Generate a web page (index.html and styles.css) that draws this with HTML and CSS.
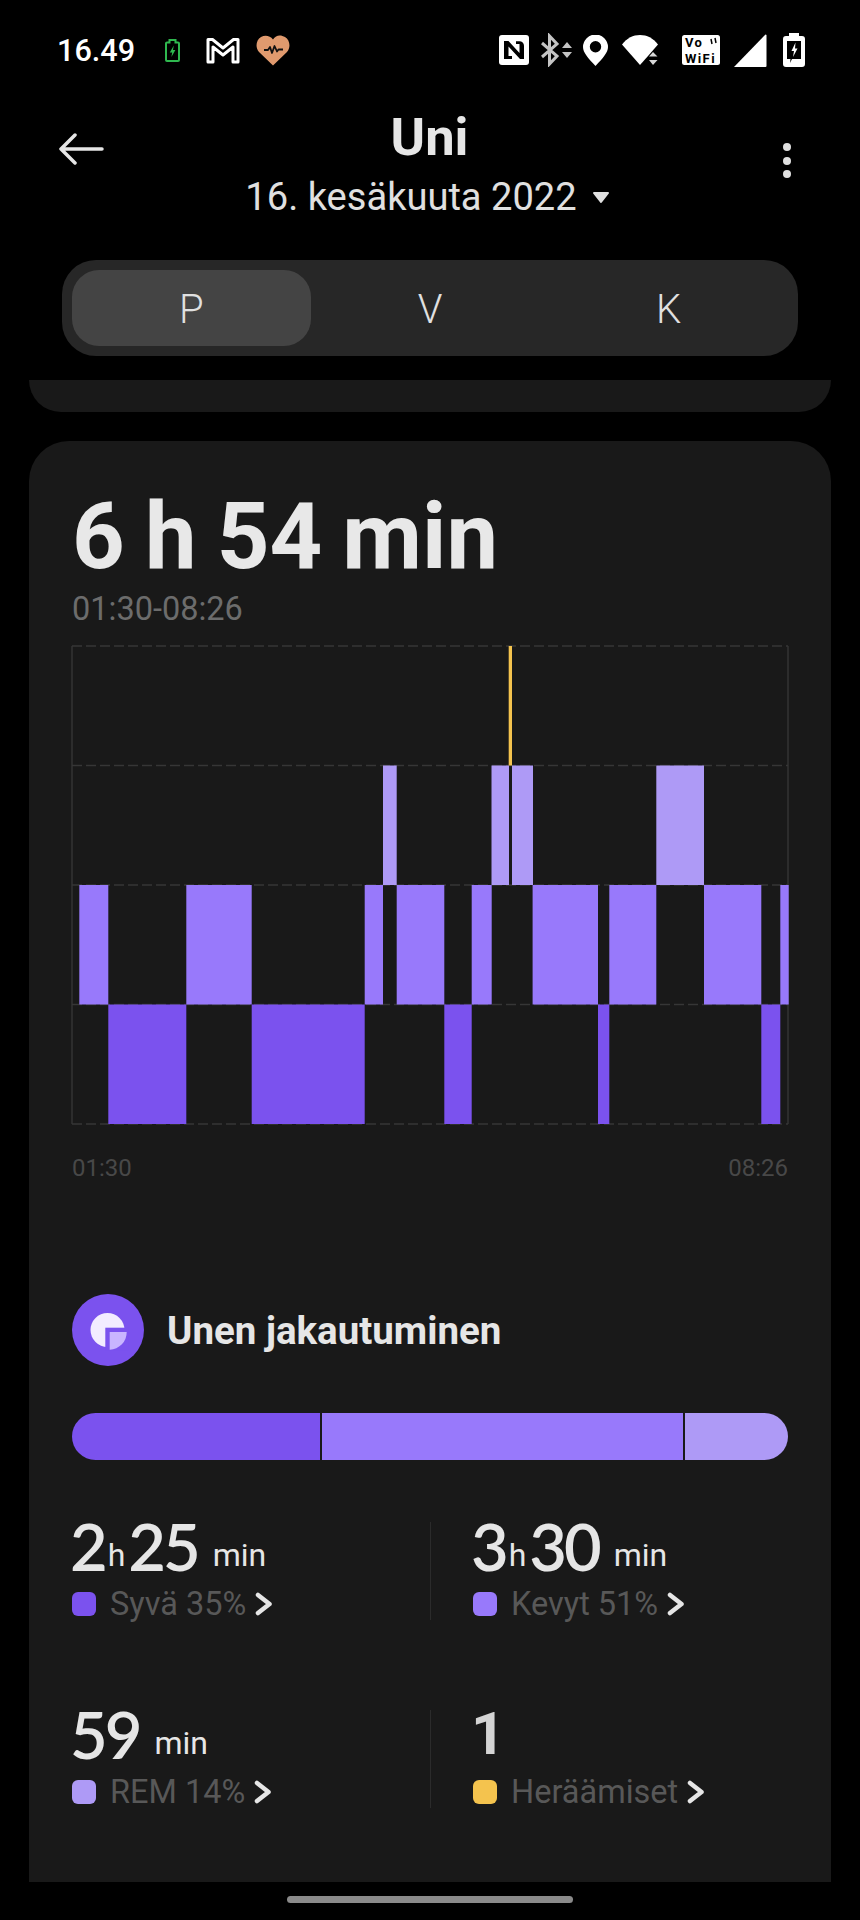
FILE: index.html
```html
<!DOCTYPE html>
<html lang="fi">
<head>
<meta charset="utf-8">
<title>Uni</title>
<link rel="stylesheet" href="styles.css">
</head>
<body>
<div class="screen">
  <div class="statusbar">
    <span class="clock">16.49</span>
    <svg class="ic ic-charge" width="15" height="24" viewBox="0 0 15 24"><path class="charge-line" d="M1 5.5a1 1 0 0 1 1-1h2.500V2h6v2.500H13a1 1 0 0 1 1 1V22a1 1 0 0 1-1 1H2a1 1 0 0 1-1-1z"/><path class="charge-fill" d="M8.800 7.500 4.800 14.500h2.400L6.400 19l4-7H8z"/></svg>
    <svg class="ic ic-gmail" width="34" height="27" viewBox="0 0 34 27"><path class="mail-line" d="M2 2.500h4.500L17 11l10.500-8.500H32V25h-5V10l-10 8L7 10v15H2z"/></svg>
    <svg class="ic ic-heart" width="34" height="31" viewBox="0 0 34 31"><path class="heart-fill" d="M17 30.500 3 17C-1 12.500 0 5 5 2c4-2.300 9-1.500 12 2.500C20-.5 25-.3 29 2c5 3 6 10.500 2 15z"/><polyline class="heart-pulse" points="8,15 12,15 14,12 16,18 18.500,11 21,16.500 22.500,14.500 27,14.500"/></svg>
    <span class="status-gap"></span>
    <svg class="ic" width="30" height="30" viewBox="0 0 30 30"><rect class="glyph" width="30" height="30" rx="3"/><path class="cut" d="M5 24V6h4.500l11 12V9H17V6.200h3.500a4.500 4.500 0 0 1 4.500 4.500V24h-4L9.500 11.500V21H13v3z"/></svg>
    <svg class="ic ic-bt" width="34" height="34" viewBox="0 0 34 34"><path class="bt-line" d="M3 10 18 23l-7.500 8V3L18 11 3 24"/><path class="bt-fill" d="M23 15l5-6 5 6zM23 19h10l-5 6z"/></svg>
    <svg class="ic ic-pin" width="25" height="31" viewBox="0 0 25 31"><path class="glyph" fill-rule="evenodd" d="M12.500 31C5 23 0 17.500 0 12a12.500 12.500 0 0 1 25 0c0 5.500-5 11-12.500 19zm0-13.500a5.700 5.700 0 1 0 0-11.400 5.700 5.700 0 0 0 0 11.400z"/></svg>
    <svg class="ic ic-wifi" width="37" height="31" viewBox="0 0 37 31"><path class="glyph" d="M0 9.500C5 3 11 0 18 0s13 3 18 9.500L26 21l-8 9z"/><path class="cut-line" d="M24 29 37 15"/><path class="wifi-arrow" d="M27 21.500l4-4.500 4.500 4.500zM27 25h8.500l-4.500 5z"/></svg>
    <svg class="ic ic-vowifi" width="38" height="31" viewBox="0 0 38 31"><rect class="glyph" width="38" height="30" rx="2.500"/><text class="vo-text" x="3" y="12">Vo</text><text class="vo-text" x="3" y="27.500">WiFi</text><path class="vo-wave" d="M29 4l1 5M33 3l1 5"/></svg>
    <svg class="ic ic-signal" width="34" height="33" viewBox="0 0 34 33"><path class="glyph" d="M32.500.5a1 1 0 0 1 1 1V32a1 1 0 0 1-1 1H1z"/></svg>
    <svg class="ic ic-batt" width="22" height="34" viewBox="0 0 22 34"><path class="glyph" d="M6 0h10v3h3a3 3 0 0 1 3 3v25a3 3 0 0 1-3 3H3a3 3 0 0 1-3-3V6a3 3 0 0 1 3-3h3z"/><path class="cut" d="M4 8h14v18H9l-2 4 .5-4H4z"/><path class="glyph" d="M12.500 9.500 8.500 18H11l-1 6 4.500-8.500H12z"/></svg>
  </div>

  <header class="topbar">
    <svg class="back" width="46" height="32" viewBox="0 0 46 32"><path class="back-line" d="M44 16H3M17 2 3 16l14 14"/></svg>
    <div class="heading">
      <h1 class="title">Uni</h1>
      <div class="date">
        <span>16. kesäkuuta 2022</span>
        <svg class="caret" width="18" height="12" viewBox="0 0 18 12"><path class="caret-fill" d="M2 1h14l-7 9z"/></svg>
      </div>
    </div>
    <div class="more"><i></i><i></i><i></i></div>
  </header>

  <nav class="tabs">
    <span class="tab tab-on">P</span>
    <span class="tab">V</span>
    <span class="tab">K</span>
  </nav>

  <main class="scroller">
    <div class="card-tail"></div>
    <section class="card">
      <div class="total">6 h 54 min</div>
      <div class="range">01:30-08:26</div>

      <svg class="chart" width="718" height="480" viewBox="71 645 718 480">
        <path class="grid-solid" d="M72 646V1124M788 646V1124"/>
        <path class="grid-dash" d="M72 646H788M72 765.500H788M72 885H788M72 1004.500H788M72 1124H788"/>
        <g class="deep">
          <rect x="108.300" y="1004.500" width="78" height="119.500"/>
          <rect x="251.700" y="1004.500" width="113" height="119.500"/>
          <rect x="444.300" y="1004.500" width="27.400" height="119.500"/>
          <rect x="598" y="1004.500" width="11.300" height="119.500"/>
          <rect x="761.300" y="1004.500" width="19" height="119.500"/>
        </g>
        <g class="light">
          <rect x="79.300" y="885" width="29" height="119.500"/>
          <rect x="186.300" y="885" width="65.400" height="119.500"/>
          <rect x="364.700" y="885" width="18.300" height="119.500"/>
          <rect x="396.700" y="885" width="47.600" height="119.500"/>
          <rect x="471.700" y="885" width="20" height="119.500"/>
          <rect x="532.600" y="885" width="65.400" height="119.500"/>
          <rect x="609.300" y="885" width="47" height="119.500"/>
          <rect x="704" y="885" width="57.300" height="119.500"/>
          <rect x="780.300" y="885" width="8.400" height="119.500"/>
        </g>
        <g class="rem">
          <rect x="383" y="765.500" width="13.700" height="119.500"/>
          <rect x="491.500" y="765.500" width="17.500" height="119.500"/>
          <rect x="512" y="765.500" width="21" height="119.500"/>
          <rect x="656.300" y="765.500" width="47.700" height="119.500"/>
        </g>
        <rect class="awake" x="508.700" y="646" width="3.300" height="119.500"/>
      </svg>

      <div class="axis"><span>01:30</span><span>08:26</span></div>

      <div class="section-head">
        <svg class="section-icon" width="72" height="72" viewBox="0 0 72 72">
          <circle class="ring" cx="36" cy="36" r="36"/>
          <circle class="pie-main" cx="35.500" cy="36" r="17"/>
          <rect class="ring" x="33.300" y="33.700" width="23" height="23"/>
          <path class="pie-slice" d="M37.700 38h17a17.500 17.500 0 0 1-17 17.700z"/>
        </svg>
        <h2 class="section-title">Unen jakautuminen</h2>
      </div>

      <div class="split">
        <span class="split-deep"></span>
        <span class="split-light"></span>
        <span class="split-rem"></span>
      </div>

      <div class="stats">
        <div class="stat">
          <div class="value"><b>2</b><small class="tight">h</small><b>25</b><small>min</small></div>
          <div class="label"><i class="dot dot-deep"></i><span>Syvä 35%</span><svg class="chev" width="18" height="24" viewBox="0 0 18 24"><path class="chev-line" d="M3 3 14.500 12 3 21"/></svg></div>
        </div>
        <div class="stat">
          <div class="value"><b>3</b><small class="tight">h</small><b>30</b><small>min</small></div>
          <div class="label"><i class="dot dot-light"></i><span>Kevyt 51%</span><svg class="chev" width="18" height="24" viewBox="0 0 18 24"><path class="chev-line" d="M3 3 14.500 12 3 21"/></svg></div>
        </div>
        <div class="stat">
          <div class="value"><b>59</b><small>min</small></div>
          <div class="label"><i class="dot dot-rem"></i><span>REM 14%</span><svg class="chev" width="18" height="24" viewBox="0 0 18 24"><path class="chev-line" d="M3 3 14.500 12 3 21"/></svg></div>
        </div>
        <div class="stat">
          <div class="value"><b class="count">1</b></div>
          <div class="label"><i class="dot dot-awake"></i><span>Heräämiset</span><svg class="chev" width="18" height="24" viewBox="0 0 18 24"><path class="chev-line" d="M3 3 14.500 12 3 21"/></svg></div>
        </div>
      </div>
    </section>
  </main>

  <div class="gesture"><span></span></div>
</div>
</body>
</html>
```

FILE: styles.css
```css
* { box-sizing: border-box; }

html, body {
  margin: 0;
  background: #000;
}

body {
  font-family: Roboto, "Liberation Sans", sans-serif;
  color: #e6e6e6;
}

.screen {
  width: 860px;
  height: 1920px;
  display: flex;
  flex-direction: column;
  overflow: hidden;
}

/* status bar */
.statusbar {
  height: 100px;
  padding: 0 55px 0 57px;
  display: flex;
  align-items: center;
  flex: none;
}

.clock {
  font-size: 30.600px;
  font-weight: 500;
  color: #fff;
  width: 108px;
}

.ic { flex: none; display: block; }
.ic-gmail { margin-left: 26px; }
.ic-heart { margin-left: 16px; }
.status-gap { flex: 1; }
.ic-bt { margin-left: 10px; margin-right: 10px; }
.ic-wifi { margin-left: 14px; }
.ic-vowifi { margin-left: 23px; }
.ic-signal { margin-left: 13px; }
.ic-batt { margin-left: 16px; }

.glyph { fill: #fff; }
.cut { fill: #000; }
.cut-line { stroke: #000; stroke-width: 3; fill: none; }
.charge-line { fill: none; stroke: #2fb84f; stroke-width: 2; }
.charge-fill { fill: #2fb84f; }
.mail-line { fill: none; stroke: #fff; stroke-width: 3; stroke-linejoin: round; }
.heart-fill { fill: #e09a6e; }
.heart-pulse { fill: none; stroke: #111; stroke-width: 1.800; stroke-linejoin: round; }
.bt-line { fill: none; stroke: #c4c4c4; stroke-width: 3; }
.bt-fill { fill: #c4c4c4; }
.wifi-arrow { fill: #d8d8d8; }
.vo-text { font: 700 13px Roboto, sans-serif; fill: #000; letter-spacing: 1.400px; }
.vo-wave { stroke: #000; stroke-width: 1.500; fill: none; }

/* title row */
.topbar {
  flex: none;
  height: 160px;
  padding: 0 59px 0 58px;
  display: grid;
  grid-template-columns: 1fr auto 1fr;
  align-items: start;
}

.back { margin-top: 33px; display: block; }
.back-line { fill: none; stroke: #e6e6e6; stroke-width: 3.500; stroke-linecap: round; stroke-linejoin: round; }

.heading { text-align: center; }

.title {
  margin: 7px 0 0;
  font-size: 52.500px;
  line-height: 60px;
  font-weight: 700;
  color: #e6e6e6;
}

.date {
  margin: 5px 0 0 -4px;
  font-size: 38.100px;
  line-height: 50px;
  color: #e0e0e0;
  display: flex;
  align-items: center;
  justify-content: center;
  gap: 15px;
}

.caret { display: block; margin-top: 2px; }
.caret-fill { fill: #e0e0e0; stroke: #e0e0e0; stroke-width: 2; stroke-linejoin: round; }

.more {
  justify-self: end;
  margin: 43px 10px 0 0;
  display: flex;
  flex-direction: column;
  gap: 5.500px;
}

.more i {
  width: 8px;
  height: 8px;
  border-radius: 50%;
  background: #e0e0e0;
}

/* P / V / K switcher */
.tabs {
  flex: none;
  height: 96px;
  margin: 0 62px;
  padding: 10px;
  border-radius: 34px;
  background: #272727;
  display: grid;
  grid-template-columns: repeat(3, 1fr);
}

.tab {
  display: flex;
  align-items: center;
  justify-content: center;
  padding-top: 3px;
  font-size: 40px;
  font-weight: 300;
  color: #e0e0e0;
  border-radius: 27px;
}

.tab-on { background: #444; }

/* scrolling area */
.scroller {
  flex: 1;
  min-height: 0;
  margin: 24px 29px 0;
  overflow: hidden;
}

.card-tail {
  height: 32px;
  background: #191919;
  border-radius: 0 0 36px 36px;
}

.card {
  margin-top: 29px;
  padding: 44px 43px 0;
  min-height: 1450px;
  background: #191919;
  border-radius: 40px 40px 0 0;
}

.total {
  font-size: 92px;
  line-height: 104px;
  font-weight: 700;
  color: #e8e8e8;
  word-spacing: -2.700px;
}

.range {
  font-size: 32.500px;
  line-height: 40px;
  color: #6c6c6c;
}

.chart {
  display: block;
  margin: 16px 0 0 -1px;
}

.grid-solid { stroke: #333; stroke-width: 1.500; fill: none; }
.grid-dash { stroke: #363636; stroke-width: 1.500; stroke-dasharray: 10 4; fill: none; }
.deep rect { fill: #7b52ee; }
.light rect { fill: #9879fb; }
.rem rect { fill: #ae9af6; }
.awake { fill: #f4c34e; }

.axis {
  margin-top: 28px;
  display: flex;
  justify-content: space-between;
  font-size: 24px;
  line-height: 30px;
  color: #484848;
}

.section-head {
  margin-top: 111px;
  display: flex;
  align-items: center;
  gap: 23px;
}

.section-icon { display: block; flex: none; }
.ring { fill: #7b52ee; }
.pie-main { fill: #f3ecff; }
.pie-slice { fill: #c9b5ff; }

.section-title {
  margin: 2px 0 0;
  font-size: 38.500px;
  line-height: 44px;
  font-weight: 700;
  color: #e6e6e6;
}

.split {
  margin-top: 47px;
  height: 47px;
  border-radius: 24px;
  overflow: hidden;
  display: flex;
  gap: 2px;
}

.split-deep { width: 248px; background: #7b52ee; }
.split-light { width: 361px; background: #9879fb; }
.split-rem { flex: 1; background: #ae9af6; }

.stats {
  margin-top: 62px;
  display: grid;
  grid-template-columns: 358px 1fr;
  grid-auto-rows: 188px;
}

.stat { height: 98px; }

.stat:nth-child(even) {
  padding-left: 42px;
  border-left: 1.500px solid #2b2b2b;
}

.value {
  height: 60px;
  margin: -6px 0 0 -2px;
  line-height: 60px;
  white-space: nowrap;
  color: #e6e6e6;
}

.value b {
  font-family: Lato, Roboto, sans-serif;
  font-size: 65px;
  font-weight: 600;
  letter-spacing: -3px;
}

.value small {
  font-size: 32px;
  font-weight: 400;
  margin-left: 15px;
  vertical-align: 5px;
}

.value small.tight {
  margin: 0 3px;
}

.value b.count {
  font-family: Roboto, sans-serif;
  font-size: 60px;
  font-weight: 700;
  letter-spacing: 0;
  color: #d4d4d4;
  vertical-align: 3px;
}

.label {
  margin-top: 15px;
  display: flex;
  align-items: center;
  font-size: 32.500px;
  line-height: 26px;
  color: #585858;
}

.dot {
  width: 24px;
  height: 24px;
  border-radius: 6px;
  margin-right: 14px;
  flex: none;
}

.dot-deep { background: #7b52ee; }
.dot-light { background: #9879fb; }
.dot-rem { background: #ae9af6; }
.dot-awake { background: #f4c34e; }

.chev { margin-left: 9px; display: block; }
.chev-line { fill: none; stroke: #e6e6e6; stroke-width: 4.500; stroke-linecap: round; stroke-linejoin: round; }

/* gesture pill */
.gesture {
  flex: none;
  height: 38px;
  padding-top: 14px;
  display: flex;
  justify-content: center;
}

.gesture span {
  width: 286px;
  height: 7px;
  border-radius: 4px;
  background: #8a8a8a;
}
```
